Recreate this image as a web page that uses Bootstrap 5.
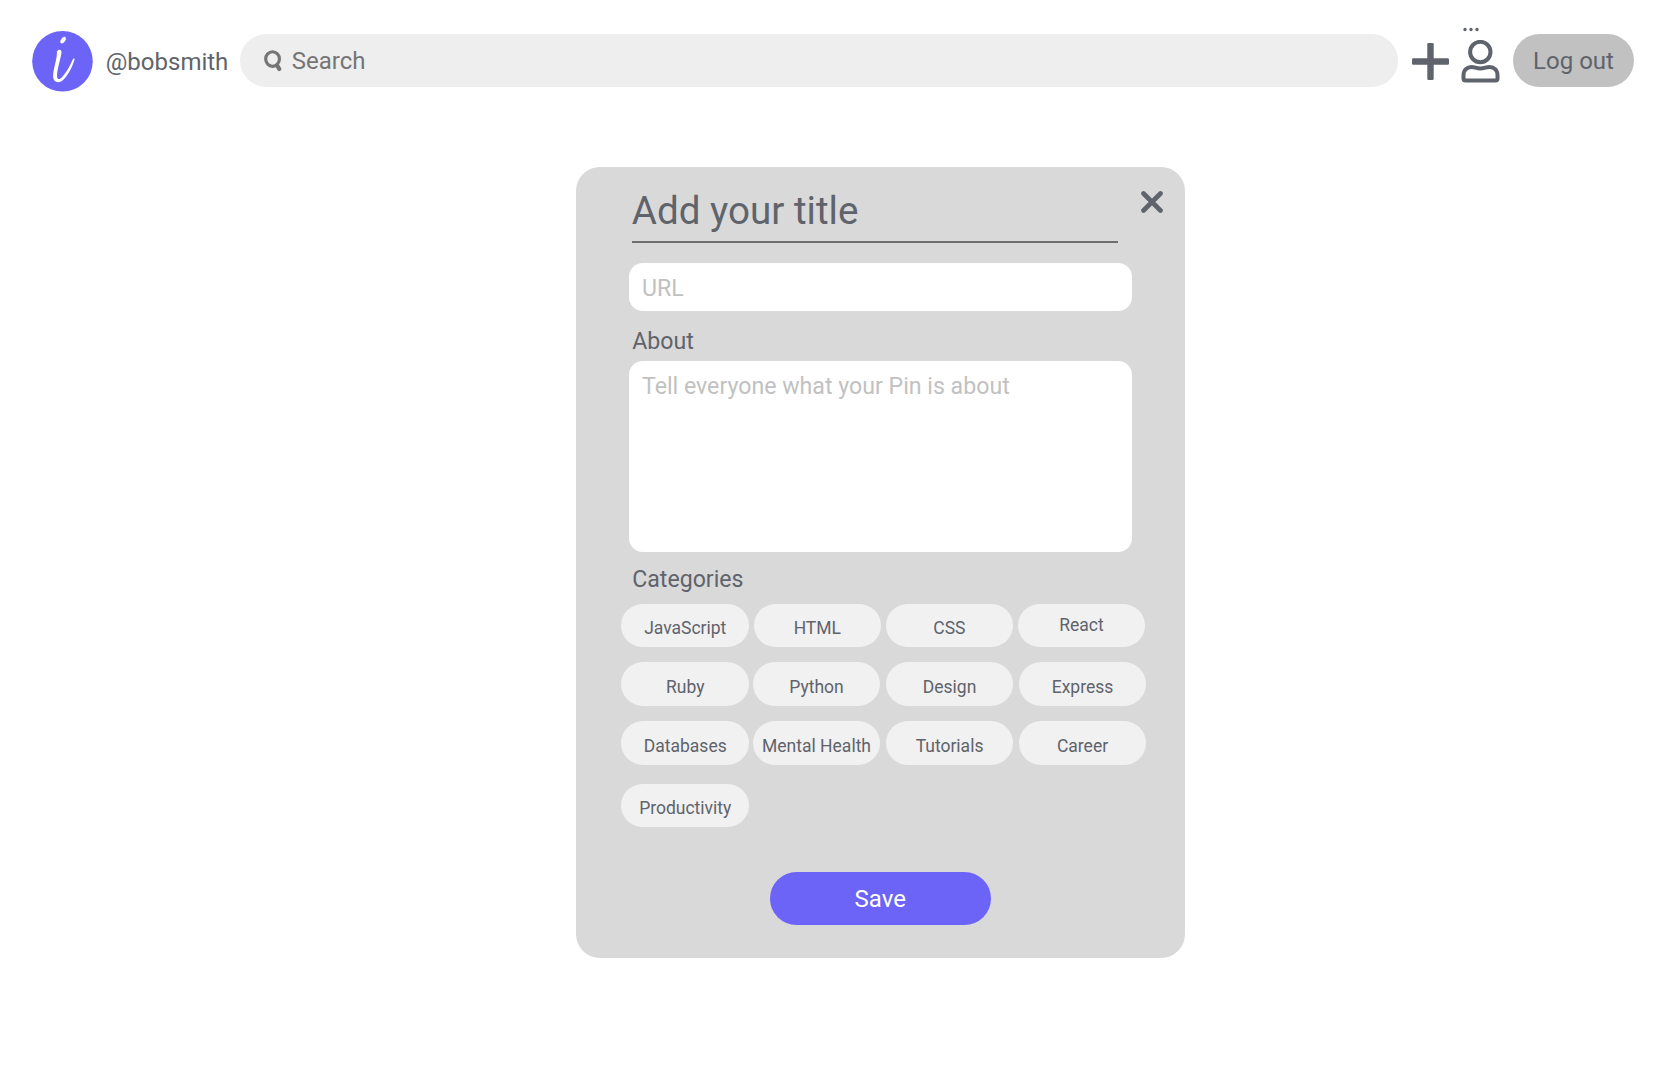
<!DOCTYPE html>
<html lang="en">
<head>
<meta charset="utf-8">
<meta name="viewport" content="width=device-width, initial-scale=1">
<title>Add a pin</title>
<link href="https://cdn.jsdelivr.net/npm/bootstrap@5.3.0/dist/css/bootstrap.min.css" rel="stylesheet">
<style>
:root{--ink:#5f636b;--violet:#6b64f7}
body{font-family:Roboto,sans-serif;color:var(--ink);min-height:1076px;background:#fff}
.topbar{height:121px;padding:0 30px 0 32px}
.brand-mark{margin-top:1px}
.user-name{font-size:24px;width:134.5px;padding:2px 0 0 12.8px;line-height:28px}
.search-box{height:53px;margin-left:12.5px;background:#eee;padding-left:24px}
.search-box input{background:transparent;color:#757575;font-size:24px;line-height:28px;padding:0 0 0 9px}
.search-box input::placeholder{color:#757575;opacity:1}
.search-box input:focus{background:transparent;box-shadow:none}
.logout{width:121px;height:53px;background:#c1c1c1;color:var(--ink);font-size:24px;padding:0;margin-left:13px}
.plus-btn{margin:1px 0 0 13.5px}
.user-btn{margin:2px 0 0 12.5px}
.more-dots{position:absolute;left:1.5px;top:-13px}
.pin-card{width:609px;height:790.5px;margin:46.2px 0 0 576.3px;background:#d9d9d9;border-radius:24px;padding:0 39px 0 45.2px}
.head{height:76px;padding-left:10.3px}
.title-input{width:486px;height:76px;border-bottom:2px solid #6c6e70;padding:12px 0 0;font-size:38.6px;line-height:44px;color:var(--ink)}
.close-btn{margin:24px -17px 0 0}
.field{width:503px;margin-left:7.5px;background:#fff;border:0;border-radius:14px;font-size:23.15px;color:var(--ink);padding:0 13px}
.field::placeholder{color:#c1c1c1;opacity:1}
.url{height:47.5px;min-height:47px;margin-top:20.3px;padding-top:3px}
textarea.field{height:191px;padding-top:9px;resize:none}
.lbl{font-size:23.1px;line-height:28px;margin-left:10.8px}
.about-lbl{margin-top:17px;margin-bottom:5px}
.cat-lbl{margin-top:14.5px;margin-bottom:9.2px}
.chip{width:127.5px;height:43.5px;background:#f1f1f1;color:var(--ink);font-size:17.5px;line-height:20px;padding:5px 0 0;border:0;margin-right:5.5px;flex:none;white-space:nowrap}
.chip:first-child{margin-right:3.8px}
.chip-row{margin-bottom:15.3px}
.chip-row.top-row .chip{margin-right:4.6px}
.chip-row.third{margin-bottom:19.2px}
.chip-row.last{margin-bottom:0}
.chip-row .chip.raised{padding:0 0 1px}
.save{width:221px;height:53px;background:var(--violet);color:#fff;font-size:24px;padding:0;margin:45px 0 0 148.3px}
</style>
</head>
<body>
<nav class="topbar d-flex align-items-center">
  <svg width="61" height="61" viewBox="0 0 61 61" class="brand-mark flex-shrink-0" aria-label="logo">
    <circle cx="30.5" cy="30.3" r="30.3" fill="#6b64f7"/>
    <path d="M28.4 11.3C28.8 8.5 30.4 6.3 32.4 6c1.7.1 1.7 2 .5 3.9-1.1 1.7-3.2 3.3-4.5 1.4Z" fill="#fff" stroke="#fff" stroke-width=".5"/>
    <path d="M24.9 20.5C26.3 18.3 29.2 18 29.5 21 29.5 25 25 38 25 45c.1 4 2.4 3.8 5 1.2C34.5 41.3 38 35 41 28c.8-1 2-.5 1.6.6C39.9 37.5 34.5 47.3 29.5 50.2c-4.3 2.300-8.300.3-8.400-5C21.1 38.5 25 28 24.9 22Z" fill="#fff"/>
  </svg>
  <span class="user-name flex-shrink-0">@bobsmith</span>
  <div class="search-box rounded-pill d-flex align-items-center flex-grow-1">
    <svg width="19" height="22" viewBox="0 0 19 22" fill="none" stroke="#757575"><ellipse cx="8.7" cy="9" rx="7" ry="7.4" stroke-width="3.2"/><path d="m13.3 15.5 2.3 3.7" stroke-width="4.2" stroke-linecap="round"/></svg>
    <input class="form-control border-0 rounded-0" type="text" placeholder="Search" aria-label="Search">
  </div>
  <svg class="plus-btn flex-shrink-0" width="37" height="37" viewBox="0 0 37 37" fill="#5f636b"><rect y="15.3" width="37" height="6.4" rx="1.3"/><rect x="15.3" width="6.4" height="37" rx="1.3"/></svg>
  <div class="user-btn position-relative flex-shrink-0">
    <svg class="more-dots" width="18" height="5" viewBox="0 0 18 5" fill="#5f636b"><circle cx="2" cy="2.5" r="1.65"/><circle cx="8" cy="2.5" r="1.65"/><circle cx="14" cy="2.5" r="1.65"/></svg>
    <svg class="d-block" width="39" height="44" viewBox="0 0 39 44" fill="none" stroke="#5f636b" stroke-width="4"><circle cx="19.3" cy="12" r="10.2"/><path d="M2.500 38.500V35.500c0-5.500 3.500-8.500 8-8.500 3.500 0 4.500 1.500 8.800 1.500S25 27 28.500 27c4.500 0 8 3 8 8.500v3a2 2 0 0 1-2 2h-30a2 2 0 0 1-2-2Z"/></svg>
  </div>
  <button class="btn logout rounded-pill border-0 flex-shrink-0">Log out</button>
</nav>
<main class="pin-card d-flex flex-column">
  <div class="head d-flex justify-content-between align-items-start">
    <input class="title-input form-control bg-transparent border-top-0 border-start-0 border-end-0 rounded-0" value="Add your title" aria-label="Title">
    <button class="close-btn btn p-0 border-0 lh-1 d-flex" aria-label="Close"><svg width="22" height="22" viewBox="0 0 22 22"><path d="M2.500 2.500l17 17M19.500 2.500l-17 17" stroke="#5f636b" stroke-width="4.6" stroke-linecap="round"/></svg></button>
  </div>
  <input class="field form-control url" placeholder="URL" aria-label="URL">
  <label class="lbl about-lbl" for="about">About</label>
  <textarea class="field form-control" id="about" placeholder="Tell everyone what your Pin is about"></textarea>
  <div class="lbl cat-lbl">Categories</div>
  <div class="d-flex flex-column">
    <div class="chip-row top-row d-flex"><button class="chip btn rounded-pill">JavaScript</button><button class="chip btn rounded-pill">HTML</button><button class="chip btn rounded-pill">CSS</button><button class="chip raised btn rounded-pill">React</button></div>
    <div class="chip-row d-flex"><button class="chip btn rounded-pill">Ruby</button><button class="chip btn rounded-pill">Python</button><button class="chip btn rounded-pill">Design</button><button class="chip btn rounded-pill">Express</button></div>
    <div class="chip-row third d-flex"><button class="chip btn rounded-pill">Databases</button><button class="chip btn rounded-pill">Mental Health</button><button class="chip btn rounded-pill">Tutorials</button><button class="chip btn rounded-pill">Career</button></div>
    <div class="chip-row last d-flex"><button class="chip btn rounded-pill">Productivity</button></div>
  </div>
  <button class="btn save rounded-pill border-0">Save</button>
</main>
<script src="https://cdn.jsdelivr.net/npm/bootstrap@5.3.0/dist/js/bootstrap.bundle.min.js"></script>
</body>
</html>
